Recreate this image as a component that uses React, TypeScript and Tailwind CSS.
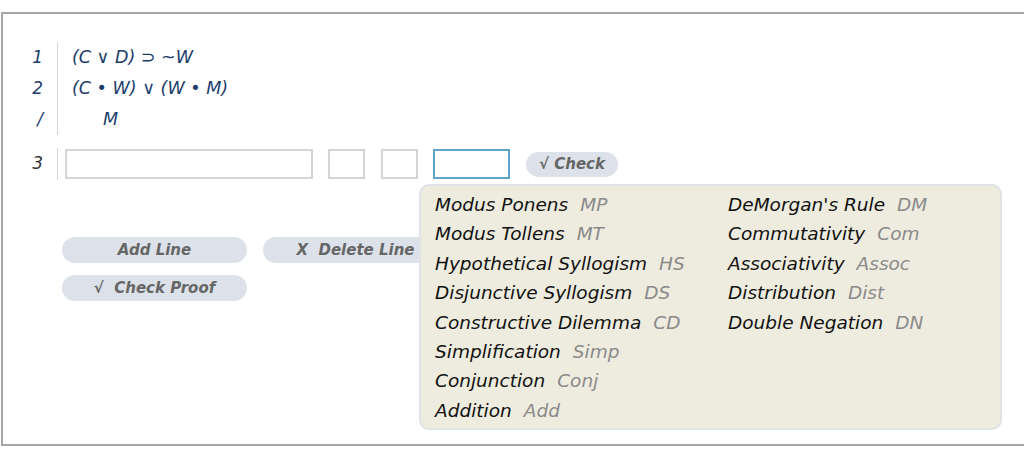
import React from "react"

const rulesLeft: [string, string][] = [
  ["Modus Ponens", "MP"],
  ["Modus Tollens", "MT"],
  ["Hypothetical Syllogism", "HS"],
  ["Disjunctive Syllogism", "DS"],
  ["Constructive Dilemma", "CD"],
  ["Simplification", "Simp"],
  ["Conjunction", "Conj"],
  ["Addition", "Add"],
]

const rulesRight: [string, string][] = [
  ["DeMorgan's Rule", "DM"],
  ["Commutativity", "Com"],
  ["Associativity", "Assoc"],
  ["Distribution", "Dist"],
  ["Double Negation", "DN"],
]

const premises = [
  { num: "1", text: <>(C ∨ D) ⊃ ~W</> },
  { num: "2", text: <>(C • W) ∨ (W • M)</> },
  { num: "/", text: <span className="pl-[31px]">M</span> },
]

function RuleColumn({ rules, width }: { rules: [string, string][]; width: string }) {
  return (
    <ul className={width}>
      {rules.map(([name, abbr]) => (
        <li key={abbr} className="leading-[29.4px] whitespace-nowrap">
          <span className="text-[#111]">{name}</span>
          <span className="ml-[12px] text-[#8a8a8a]">{abbr}</span>
        </li>
      ))}
    </ul>
  )
}

function PillButton({ children, className = "" }: { children: React.ReactNode; className?: string }) {
  return (
    <button
      className={`h-[26px] w-[185px] rounded-full bg-[#dde2ea] text-[15px] font-bold italic text-[#666] ${className}`}
    >
      {children}
    </button>
  )
}

export default function App() {
  return (
    <div className="h-[473px] w-[1024px] overflow-hidden bg-white pt-[12px] pl-px" style={{ fontFamily: '"DejaVu Sans", Verdana, sans-serif' }}>
      <div className="relative h-[434px] w-[1040px] border-2 border-[#a6a6a6]">
        {/* premises */}
        <div className="mt-[28px]">
          {premises.map((p) => (
            <div key={p.num} className="flex h-[31px] items-center">
              <div className="w-[54px] pr-[14px] text-right text-[17px] italic text-[#1d3e6c]">{p.num}</div>
              <div className="flex h-full items-center border-l border-[#d6d6d6] pl-[14px] text-[17.5px] italic text-[#1d3e6c]">
                {p.text}
              </div>
            </div>
          ))}
        </div>

        {/* new line */}
        <div className="mt-[13px] flex h-[32px] items-center">
          <div className="w-[54px] pr-[14px] text-right text-[17px] italic text-[#333]">3</div>
          <div className="flex h-full items-center border-l border-[#d6d6d6] pl-[7px]">
            <input className="h-[30px] w-[248px] border-2 border-[#d4d4d4] bg-white outline-none" />
            <input className="ml-[15px] h-[30px] w-[37px] border-2 border-[#d4d4d4] bg-white outline-none" />
            <input className="ml-[16px] h-[30px] w-[37px] border-2 border-[#d4d4d4] bg-white outline-none" />
            <input className="ml-[15px] h-[30px] w-[77px] border-2 border-[#5ea3cc] bg-white outline-none" />
            <button className="ml-[16px] h-[25px] w-[92px] rounded-full bg-[#dde2ea] text-[15px] font-bold italic text-[#666]">
              √ Check
            </button>
          </div>
        </div>

        {/* actions */}
        <div className="mt-[57px] flex flex-col gap-[12px] pl-[59px]">
          <div className="flex gap-[16px]">
            <PillButton>Add Line</PillButton>
            <PillButton>X&nbsp; Delete Line</PillButton>
          </div>
          <PillButton>√&nbsp; Check Proof</PillButton>
        </div>

        {/* rules menu */}
        <div className="absolute left-[416px] top-[170px] flex h-[246px] w-[583px] rounded-[10px] border-2 border-[#dfe3e6] bg-[#eeecdf] pl-[14px] pt-[4px] text-[18.5px] italic">
          <RuleColumn rules={rulesLeft} width="w-[293px]" />
          <RuleColumn rules={rulesRight} width="" />
        </div>
      </div>
    </div>
  )
}
